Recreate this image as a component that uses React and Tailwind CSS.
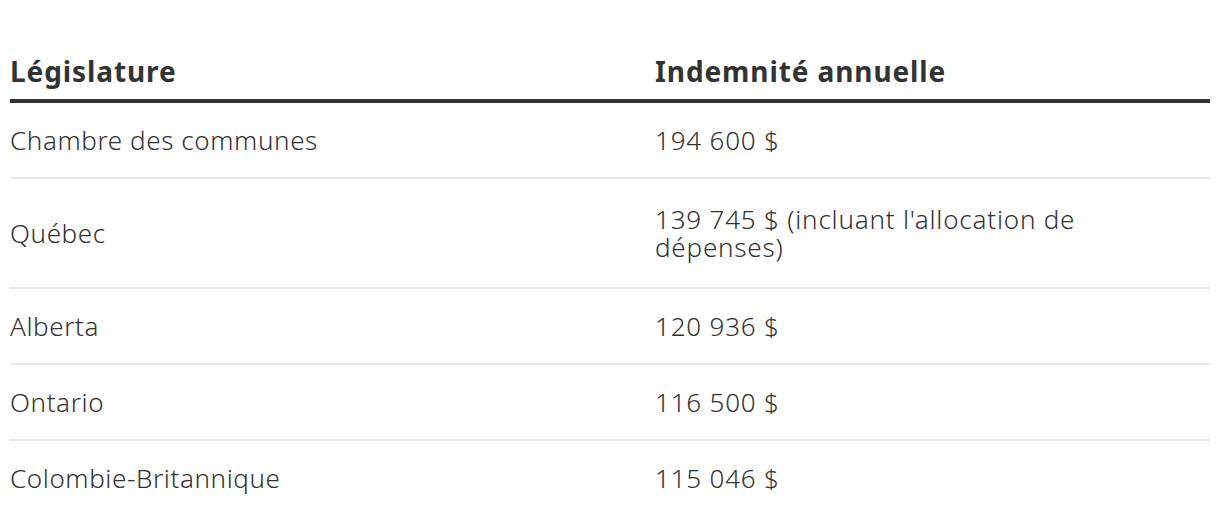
const rows = [
  { name: "Chambre des communes", amount: "194 600 $" },
  { name: "Québec", amount: "139 745 $ (incluant l'allocation de dépenses)", tall: true },
  { name: "Alberta", amount: "120 936 $" },
  { name: "Ontario", amount: "116 500 $" },
  { name: "Colombie-Britannique", amount: "115 046 $" },
];

export default function App() {
  return (
    <div className="bg-white min-h-screen px-[10px] pt-[55px] text-[#333] font-['Noto_Sans',sans-serif]">
      <table className="w-full border-collapse text-left">
        <thead>
          <tr className="border-b-4 border-[#333]">
            <th className="w-[645px] pb-[12px] text-[28px] leading-[32px] font-bold tracking-[0.9px]">Législature</th>
            <th className="pb-[12px] text-[28px] leading-[32px] font-bold tracking-[0.9px]">Indemnité annuelle</th>
          </tr>
        </thead>
        <tbody>
          {rows.map((r) => (
            <tr key={r.name} className="border-b-2 border-[#ebebeb] last:border-b-0">
              <td className={r.tall ? "py-[26px] text-[26px] leading-[28px] font-light tracking-[0.6px]" : "py-[23px] text-[26px] leading-[28px] font-light tracking-[0.6px]"}>
                {r.name}
              </td>
              <td className={r.tall ? "py-[26px] pr-[30px] text-[26px] leading-[28px] font-light tracking-[0.8px]" : "py-[23px] pr-[30px] text-[26px] leading-[28px] font-light tracking-[0.8px]"}>
                {r.amount}
              </td>
            </tr>
          ))}
        </tbody>
      </table>
    </div>
  );
}
